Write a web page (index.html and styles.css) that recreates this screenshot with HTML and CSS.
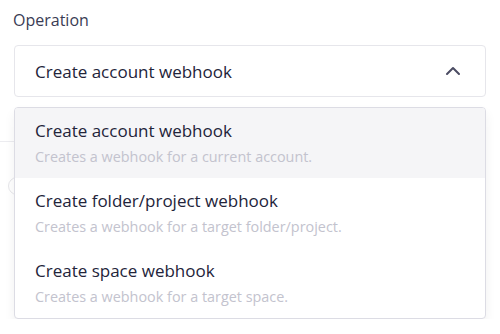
FILE: index.html
```html
<!DOCTYPE html>
<html lang="en">
<head>
    <meta charset="UTF-8">
    <meta name="viewport" content="width=device-width, initial-scale=1.0">
    <title>Operation</title>
    <link rel="stylesheet" href="styles.css">
</head>
<body>
    <div class="field">
        <label class="field-label">Operation</label>
        <div class="select">
            <span class="select-value">Create account webhook</span>
            <svg class="chevron" width="16" height="10" viewBox="0 0 16 10">
                <path d="M2 8 L8 2 L14 8" fill="none" stroke="#4b4c63" stroke-width="2" stroke-linecap="round" stroke-linejoin="round"/>
            </svg>
        </div>
        <div class="behind">
            <div class="behind-line"></div>
            <div class="behind-dot"></div>
        </div>
        <ul class="menu">
            <li class="menu-item active">
                <div class="item-title">Create account webhook</div>
                <div class="item-desc">Creates a webhook for a current account.</div>
            </li>
            <li class="menu-item">
                <div class="item-title">Create folder/project webhook</div>
                <div class="item-desc">Creates a webhook for a target folder/project.</div>
            </li>
            <li class="menu-item">
                <div class="item-title">Create space webhook</div>
                <div class="item-desc">Creates a webhook for a target space.</div>
            </li>
        </ul>
    </div>
</body>
</html>
```

FILE: styles.css
```css
body {
    font-family: 'Open Sans', Lato, Arial, sans-serif;
    background-color: white;
    margin: 0;
    padding: 0 14px;
}

.field {
    position: relative;
    padding-top: 10px;
}

.field-label {
    display: block;
    font-size: 16px;
    line-height: 20px;
    color: #3a3c54;
    margin-left: -1px;
    margin-bottom: 15px;
}

.select {
    height: 50px;
    border: 1px solid #e6e6eb;
    border-radius: 4px;
    display: flex;
    align-items: center;
    justify-content: space-between;
    padding: 0 24px 0 20px;
}

.select-value {
    font-size: 17px;
    color: #23243a;
}

.behind {
    height: 0;
}

.behind-line {
    position: absolute;
    left: -14px;
    top: 141px;
    width: 30px;
    border-top: 1px solid #ececf0;
}

.behind-dot {
    position: absolute;
    left: -6px;
    top: 177px;
    width: 16px;
    height: 16px;
    border-radius: 50%;
    border: 1px solid #e6e6ea;
}

.menu {
    position: relative;
    list-style: none;
    margin: 10px 0 0;
    padding: 0;
    background-color: white;
    border: 1px solid #dcdce4;
    border-radius: 4px;
    box-shadow: 0 6px 12px rgba(0, 0, 0, 0.06);
    overflow: hidden;
}

.menu-item {
    padding: 12px 20px;
}

.menu-item.active {
    background-color: #f5f5f7;
}

.item-title {
    font-size: 17px;
    line-height: 22px;
    color: #23243a;
}

.item-desc {
    font-size: 14.4px;
    line-height: 18px;
    margin-top: 6px;
    color: #c3c3ce;
}
```
